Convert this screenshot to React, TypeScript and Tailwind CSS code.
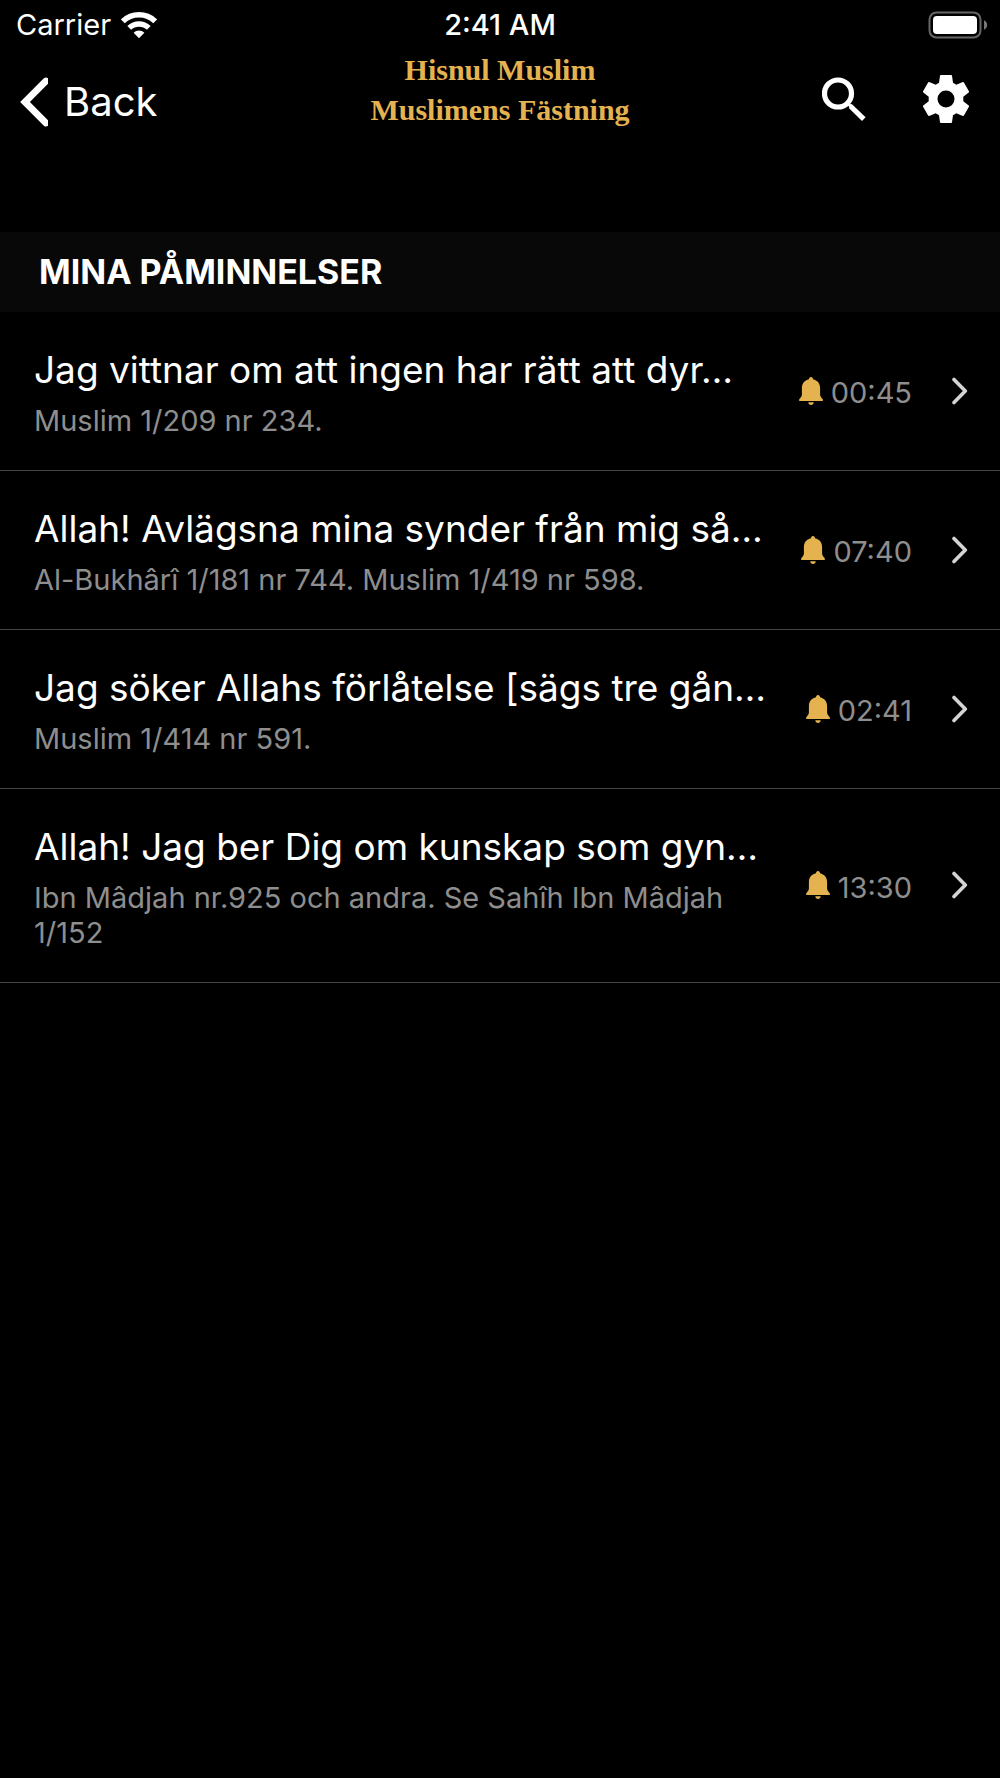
type Reminder = { title: string; source: string; time: string };

const reminders: Reminder[] = [
  { title: "Jag vittnar om att ingen har rätt att dyr…", source: "Muslim 1/209 nr 234.", time: "00:45" },
  { title: "Allah! Avlägsna mina synder från mig så…", source: "Al-Bukhârî 1/181 nr 744. Muslim 1/419 nr 598.", time: "07:40" },
  { title: "Jag söker Allahs förlåtelse [sägs tre gån…", source: "Muslim 1/414 nr 591.", time: "02:41" },
  { title: "Allah! Jag ber Dig om kunskap som gyn…", source: "Ibn Mâdjah nr.925 och andra. Se Sahîh Ibn Mâdjah 1/152", time: "13:30" },
];

function WifiIcon() {
  return (
    <svg className="h-7 w-9" viewBox="0 0 36 28" fill="none" aria-hidden="true">
      <path d="M1.8 10.3a23.4 23.4 0 0 1 32.4 0" stroke="#fff" strokeWidth="5.6" />
      <path d="M8.2 16.9a14.2 14.2 0 0 1 19.6 0" stroke="#fff" strokeWidth="5.4" />
      <path d="M18 27.2l-5.4-5.5a7.8 7.8 0 0 1 10.8 0z" fill="#fff" />
    </svg>
  );
}

function BatteryIcon() {
  return (
    <svg className="h-7 w-[60px]" viewBox="0 0 60 28" aria-hidden="true">
      <rect x="1.5" y="1.5" width="51" height="25" rx="7" fill="none" stroke="#666" strokeWidth="2" />
      <rect x="5" y="5" width="44" height="18" rx="4" fill="#fff" />
      <path d="M56 9.2c2 .9 3.2 2.7 3.2 4.8s-1.2 3.9-3.2 4.8z" fill="#777" />
    </svg>
  );
}

function BackIcon() {
  return (
    <svg className="h-[52px] w-8" viewBox="0 0 32 52" fill="none" aria-hidden="true">
      <path d="M30 5L9 26L30 47" stroke="#fff" strokeWidth="6.8" strokeLinecap="round" />
    </svg>
  );
}

function SearchIcon() {
  return (
    <svg className="h-11 w-11" viewBox="0 0 44 44" aria-hidden="true">
      <circle cx="16" cy="16.5" r="13.5" fill="none" stroke="#fff" strokeWidth="5.2" />
      <path d="M29.8 27l13.8 13.3-3.6 3.6L27.3 31.5l-.2-3.2z" fill="#fff" />
      <path d="M25 25.5l5 5" stroke="#fff" strokeWidth="3" />
    </svg>
  );
}

function GearIcon() {
  return (
    <svg className="size-12" viewBox="0 0 48 48" fill="#fff" fillRule="evenodd" aria-hidden="true">
      <path d="M18.9 0h10.2q.8 0 .9.8l1 7 3.300 1.900 6.500-2.600q.7-.3 1.100.4l5 8.700q.4.700-.2 1.200L41.300 21.700v4.600l5.400 4.300q.6.500.2 1.200l-5 8.700q-.4.700-1.100.4l-6.500-2.600-3.300 1.900-1 7q-.1.800-.9.800H18.900q-.8 0-.9-.8l-1-7-3.300-1.900-6.500 2.600q-.7.300-1.100-.4l-5-8.700q-.4-.7.200-1.200l5.400-4.300v-4.600l-5.400-4.300q-.6-.5-.2-1.200l5-8.700q.4-.7 1.100-.4l6.500 2.600L17 7.800l1-7q.1-.8.9-.8zM24 15.500a8.500 8.500 0 1 0 0 17 8.500 8.500 0 0 0 0-17z" />
    </svg>
  );
}

function BellIcon() {
  return (
    <svg className="h-7 w-6 shrink-0" viewBox="0 0 70 83" fill="#e4b350" aria-hidden="true">
      <path d="M35 0c4 0 6 3 6 7 13 3 21 13 21 26v19c0 5 3 9 8 14v5H0v-5c5-5 8-9 8-14V33C8 20 16 10 29 7c0-4 2-7 6-7z" />
      <path d="M27 75h16c0 5-4 8-8 8s-8-3-8-8z" />
    </svg>
  );
}

function ChevronIcon() {
  return (
    <svg className="h-7 w-4 shrink-0" viewBox="0 0 16 28" fill="none" aria-hidden="true">
      <path d="M2 2.5L13.3 14L2 25.5" stroke="#d4d4d6" strokeWidth="3.6" strokeLinecap="round" strokeLinejoin="round" />
    </svg>
  );
}

export default function App() {
  return (
    <div className="min-h-screen bg-black font-['Inter',sans-serif] text-white">
      <div className="grid h-[50px] grid-cols-[1fr_auto_1fr] items-center px-3 text-[29px] leading-9">
        <div className="flex items-center gap-[10px] pl-1">
          <span>Carrier</span>
          <WifiIcon />
        </div>
        <span className="font-medium">2:41 AM</span>
        <div className="flex justify-end">
          <BatteryIcon />
        </div>
      </div>

      <header className="grid grid-cols-[1fr_auto_1fr] items-start px-4 pb-[78px]">
        <button type="button" className="flex h-[104px] items-center gap-4 justify-self-start text-[40px] leading-[46px]">
          <BackIcon />
          <span>Back</span>
        </button>
        <h1 className="text-center font-['Liberation_Serif',serif] text-[30px] leading-10 font-bold text-[#e4b350]">
          Hisnul Muslim
          <br />
          Muslimens Fästning
        </h1>
        <div className="flex h-[98px] items-center justify-end gap-14 pr-[14px]">
          <button type="button" aria-label="Sök">
            <SearchIcon />
          </button>
          <button type="button" aria-label="Inställningar">
            <GearIcon />
          </button>
        </div>
      </header>

      <main>
        <h2 className="bg-[#080808] px-[39px] py-5 text-[34px] leading-10 font-bold">MINA PÅMINNELSER</h2>
        <ul>
          {reminders.map((r) => (
            <li key={r.time} className="border-b border-[#444]">
              <button type="button" className="flex w-full items-center pt-[35px] pr-8 pb-8 pl-[34px] text-left">
                <span className="flex min-w-0 flex-1 flex-col gap-[10px]">
                  <span className="text-[37px] leading-[46px] whitespace-nowrap">{r.title}</span>
                  <span className="text-[29px] leading-[35px] text-[#8e8e8e]">{r.source}</span>
                </span>
                <span className="ml-8 flex items-center gap-2 text-[29px] leading-[35px] text-[#8e8e8e]">
                  <span className="flex pb-1">
                    <BellIcon />
                  </span>
                  <span>{r.time}</span>
                </span>
                <span className="ml-10 flex pb-1">
                  <ChevronIcon />
                </span>
              </button>
            </li>
          ))}
        </ul>
      </main>
    </div>
  );
}
